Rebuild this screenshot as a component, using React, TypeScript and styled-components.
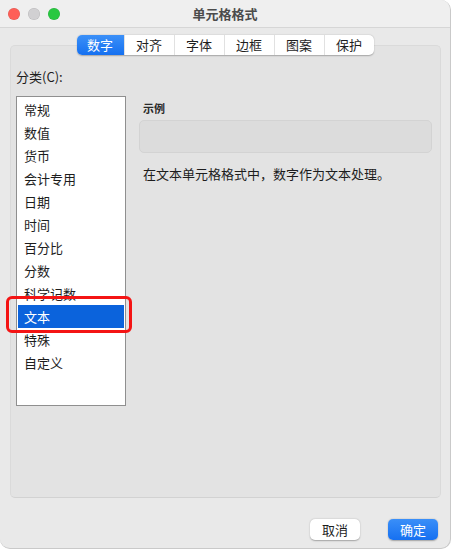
import React from "react";
import styled, { createGlobalStyle } from "styled-components";

const GlobalStyle = createGlobalStyle`
  html, body {
    margin: 0;
    padding: 0;
    background: #ffffff;
  }
  body {
    font-family: "Noto Sans CJK SC", "Noto Sans", "Liberation Sans", sans-serif;
    color: #1d1d1d;
  }
`;

const Window = styled.div`
  width: 451px;
  height: 549px;
  box-sizing: border-box;
  background: #e9e9e9;
  border: 1px solid #c9c9c9;
  border-top: none;
  border-left: none;
  border-radius: 0 10px 10px 10px;
  overflow: hidden;
  display: flex;
  flex-direction: column;
`;

const TitleBar = styled.div`
  height: 28px;
  box-sizing: border-box;
  background: #efefef;
  border-bottom: 1px solid #d6d6d6;
  display: grid;
  grid-template-columns: 1fr auto 1fr;
  align-items: center;
`;

const Lights = styled.div`
  display: flex;
  gap: 8px;
  padding-left: 8px;
`;

const Light = styled.span<{ $color: string }>`
  width: 12px;
  height: 12px;
  border-radius: 50%;
  background: ${(p) => p.$color};
  box-shadow: inset 0 0 0 0.5px rgba(0, 0, 0, 0.12);
`;

const Title = styled.div`
  font-size: 13px;
  font-weight: 700;
  color: #4b4b4b;
  line-height: 16px;
`;

const Tabs = styled.div`
  align-self: center;
  margin-top: 7px;
  height: 20px;
  display: flex;
  background: #ffffff;
  border-radius: 5px;
  box-shadow: 0 0.5px 1.5px rgba(0, 0, 0, 0.28);
  position: relative;
  z-index: 1;
  overflow: hidden;
`;

const Tab = styled.div<{ $active?: boolean; $first?: boolean }>`
  width: ${(p) => (p.$first ? 47 : 50)}px;
  box-sizing: border-box;
  display: flex;
  align-items: center;
  justify-content: center;
  font-size: 13px;
  line-height: 20px;
  color: ${(p) => (p.$active ? "#ffffff" : "#1e1e1e")};
  background: ${(p) =>
    p.$active ? "linear-gradient(#3b90f8, #1570f0)" : "transparent"};
  border-left: ${(p) =>
    p.$first || p.$active ? "none" : "1px solid #e1e1e1"};
`;

const Panel = styled.div`
  margin: -10px 9px 0 10px;
  height: 453px;
  box-sizing: border-box;
  background: #e3e3e3;
  border: 1px solid #dadada;
  border-bottom-color: #d2d2d2;
  border-radius: 5px;
  padding: 23px 8px 0 5px;
  display: flex;
  flex-direction: column;
`;

const Label = styled.div`
  font-size: 13px;
  line-height: 16px;
  color: #1d1d1d;
`;

const Content = styled.div`
  margin-top: 11px;
  display: grid;
  grid-template-columns: 110px 1fr;
  column-gap: 13px;
`;

const ListWrap = styled.div`
  position: relative;
`;

const List = styled.div`
  height: 310px;
  box-sizing: border-box;
  background: #ffffff;
  border: 1px solid #8f8f8f;
  padding: 1px;
  display: flex;
  flex-direction: column;
`;

const Item = styled.div<{ $selected?: boolean }>`
  height: 23px;
  line-height: 23px;
  padding-left: 6px;
  font-size: 13px;
  color: ${(p) => (p.$selected ? "#ffffff" : "#1d1d1d")};
  background: ${(p) => (p.$selected ? "#0b63dc" : "transparent")};
`;

const Highlight = styled.div`
  position: absolute;
  left: -10px;
  top: 200px;
  width: 126px;
  height: 37px;
  box-sizing: border-box;
  border: 3px solid #f41414;
  border-radius: 6px;
  pointer-events: none;
`;

const Side = styled.div`
  display: flex;
  flex-direction: column;
`;

const SampleLabel = styled.div`
  margin-top: 5px;
  padding-left: 4px;
  font-size: 11px;
  font-weight: 700;
  line-height: 14px;
  color: #2a2a2a;
`;

const SampleBox = styled.div`
  margin-top: 5px;
  height: 33px;
  box-sizing: border-box;
  background: #dcdcdc;
  border: 1px solid #d3d3d3;
  border-radius: 5px;
`;

const Description = styled.div`
  margin-top: 12px;
  padding-left: 4px;
  font-size: 13px;
  line-height: 18px;
  color: #1d1d1d;
`;

const Footer = styled.div`
  display: flex;
  justify-content: flex-end;
  gap: 28px;
  padding: 21px 12px 0 0;
`;

const Button = styled.div<{ $primary?: boolean }>`
  width: 50px;
  height: 21px;
  border-radius: 5px;
  display: flex;
  align-items: center;
  justify-content: center;
  font-size: 13px;
  color: ${(p) => (p.$primary ? "#ffffff" : "#1d1d1d")};
  background: ${(p) =>
    p.$primary ? "linear-gradient(#3a8ff8, #1670f1)" : "#ffffff"};
  box-shadow: 0 0.5px 1.5px rgba(0, 0, 0, 0.3);
`;

const tabs = ["数字", "对齐", "字体", "边框", "图案", "保护"];
const categories = [
  "常规",
  "数值",
  "货币",
  "会计专用",
  "日期",
  "时间",
  "百分比",
  "分数",
  "科学记数",
  "文本",
  "特殊",
  "自定义",
];

export default function App() {
  return (
    <>
      <GlobalStyle />
      <Window>
        <TitleBar>
          <Lights>
            <Light $color="#fe5f57" />
            <Light $color="#d1d0d2" />
            <Light $color="#28c840" />
          </Lights>
          <Title>单元格格式</Title>
          <div />
        </TitleBar>
        <Tabs>
          {tabs.map((t, i) => (
            <Tab key={t} $first={i === 0} $active={i === 0}>
              {t}
            </Tab>
          ))}
        </Tabs>
        <Panel>
          <Label>分类(C):</Label>
          <Content>
            <ListWrap>
              <List>
                {categories.map((c) => (
                  <Item key={c} $selected={c === "文本"}>
                    {c}
                  </Item>
                ))}
              </List>
              <Highlight />
            </ListWrap>
            <Side>
              <SampleLabel>示例</SampleLabel>
              <SampleBox />
              <Description>在文本单元格格式中，数字作为文本处理。</Description>
            </Side>
          </Content>
        </Panel>
        <Footer>
          <Button>取消</Button>
          <Button $primary>确定</Button>
        </Footer>
      </Window>
    </>
  );
}
